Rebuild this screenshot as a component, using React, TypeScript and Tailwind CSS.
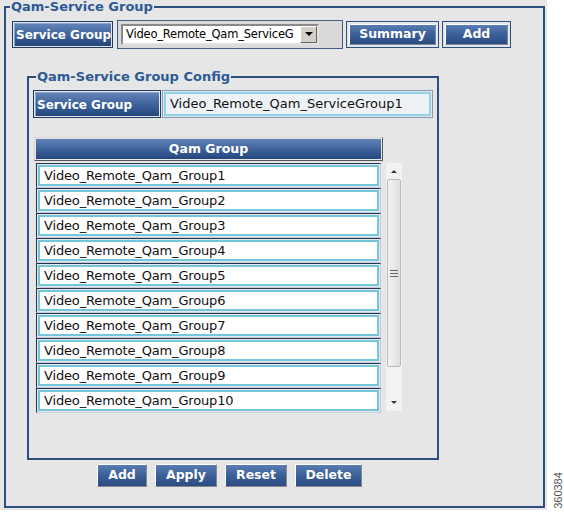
import React from "react";

const GROUPS = Array.from({ length: 10 }, (_, i) => `Video_Remote_Qam_Group${i + 1}`);

function FrameButton({ label, width }: { label: string; width: string }) {
  return (
    <div className={`h-[27px] border border-[#2d4f7f] p-[2px] ${width}`}>
      <div className="flex h-full items-center justify-center whitespace-nowrap border border-t-white border-l-white border-b-[#7a8aa0] border-r-[#7a8aa0] bg-gradient-to-b from-[#5a7db3] via-[#3b5f97] to-[#2a4c82] text-[12.5px] font-bold text-white">
        {label}
      </div>
    </div>
  );
}

function PlainButton({ label, width }: { label: string; width: string }) {
  return (
    <div
      className={`flex h-[23px] items-center justify-center whitespace-nowrap border border-t-white border-l-white border-b-[#888] border-r-[#888] bg-gradient-to-b from-[#5a7db3] via-[#3b5f97] to-[#2a4c82] text-[12.5px] font-bold text-white ${width}`}
    >
      {label}
    </div>
  );
}

function Label({ text, width, height }: { text: string; width: string; height: string }) {
  return (
    <div className={`border border-[#1f3a63] p-px ${width} ${height}`}>
      <div className="flex h-full items-center whitespace-nowrap border-t border-l border-[#8aa3c8] bg-gradient-to-b from-[#6283b8] via-[#3e639b] to-[#23467c] pl-[1px] text-[12px] font-bold text-white">
        {text}
      </div>
    </div>
  );
}

function Scrollbar() {
  return (
    <div className="ml-[5px] flex h-[248px] w-[16px] flex-col items-center bg-[#f2f2f2]">
      <svg width="16" height="16" viewBox="0 0 16 16" className="shrink-0">
        <path d="M5 10 L8 7 L11 10 Z" fill="#333" />
      </svg>
      <div className="flex h-[188px] w-[14px] items-center justify-center rounded-[2px] border border-[#b8b8b8] bg-gradient-to-r from-[#f4f4f4] to-[#dedede]">
        <svg width="8" height="7" viewBox="0 0 8 7">
          <path d="M0 0.5 H8 M0 3.5 H8 M0 6.5 H8" stroke="#666" strokeWidth="1" />
        </svg>
      </div>
      <div className="flex-1" />
      <svg width="16" height="16" viewBox="0 0 16 16" className="shrink-0">
        <path d="M5 6 L8 9 L11 6 Z" fill="#333" />
      </svg>
    </div>
  );
}

export default function App() {
  return (
    <div className="relative h-[518px] w-[564px] bg-white font-['DejaVu_Sans',Verdana,sans-serif]">
      <div className="h-[510px] w-[547px] bg-[#e6e6e6] pl-[4px]">
        <fieldset className="h-[508px] w-[541px] border-2 border-[#2d4f7f] px-[6px]">
          <legend className="ml-[-2px] px-px text-[13px] leading-[13px] font-bold text-[#2d5a94]">
            Qam-Service Group
          </legend>

          <div className="mt-[7px] flex items-center">
            <Label text="Service Group" width="w-[101px]" height="h-[27px]" />
            <div className="ml-[4px] flex h-[29px] w-[226px] items-center border border-[#3e5e86] bg-[#dadada] px-[3px]">
              <div className="flex h-[21px] w-[198px] items-center justify-between border-2 border-t-[#8a8a8a] border-l-[#8a8a8a] border-b-[#e0e0e0] border-r-[#e0e0e0] bg-white pl-[3px]">
                <span className="whitespace-nowrap text-[11.5px] tracking-[-0.2px] text-black">
                  Video_Remote_Qam_ServiceG
                </span>
                <div className="flex h-[17px] w-[17px] shrink-0 items-center justify-center border border-t-white border-l-white border-b-[#666] border-r-[#666] bg-[#d4d0c8]">
                  <svg width="8" height="5" viewBox="0 0 8 5">
                    <path d="M0 0 H8 L4 4 Z" fill="#000" />
                  </svg>
                </div>
              </div>
            </div>
            <div className="ml-[3px]">
              <FrameButton label="Summary" width="w-[93px]" />
            </div>
            <div className="ml-[3px]">
              <FrameButton label="Add" width="w-[69px]" />
            </div>
          </div>

          <fieldset className="ml-[15px] mt-[21px] h-[390px] w-[412px] border-2 border-[#2d4f7f] px-[4px]">
            <legend className="ml-[3px] px-px text-[13px] leading-[13px] font-bold text-[#2d5a94]">
              Qam-Service Group Config
            </legend>

            <div className="mt-[7px] flex items-center">
              <Label text="Service Group" width="w-[128px]" height="h-[28px]" />
              <div className="ml-[1px] h-[28px] w-[271px] border border-[#8a9ab0] p-px">
                <div className="flex h-full items-center border-2 border-[#8fd4e8] bg-[#eef2f6] pl-[4px] text-[13px] text-[#111]">
                  Video_Remote_Qam_ServiceGroup1
                </div>
              </div>
            </div>

            <div className="ml-[1px] mt-[19px] h-[24px] w-[349px] border border-[#d8d8d8] border-r-[#555] border-b-[#555] p-px">
              <div className="flex h-full items-center justify-center bg-gradient-to-b from-[#6283b8] via-[#3e639b] to-[#23467c] text-[12.5px] font-bold text-white">
                Qam Group
              </div>
            </div>

            <div className="ml-[3px] mt-[2px] flex">
              <div className="flex h-[250px] w-[345px] flex-col overflow-hidden">
                {GROUPS.map((g) => (
                  <div
                    key={g}
                    className="h-[25px] shrink-0 border border-[#22364f] border-r-[#c7cbe0] border-b-[#c7cbe0] p-px"
                  >
                    <div className="flex h-full items-center border-2 border-[#74c6dc] bg-white pl-[4px] text-[13px] tracking-[-0.15px] text-[#111]">
                      {g}
                    </div>
                  </div>
                ))}
              </div>
              <Scrollbar />
            </div>
          </fieldset>

          <div className="ml-[85px] mt-[4px] flex gap-[8px]">
            <PlainButton label="Add" width="w-[50px]" />
            <PlainButton label="Apply" width="w-[62px]" />
            <PlainButton label="Reset" width="w-[62px]" />
            <PlainButton label="Delete" width="w-[67px]" />
          </div>
        </fieldset>
      </div>

      <div className="absolute left-[536px] top-[485px] w-[44px] -rotate-90 text-center font-['Liberation_Sans',sans-serif] text-[11px] leading-[11px] text-[#555]">
        360384
      </div>
    </div>
  );
}
